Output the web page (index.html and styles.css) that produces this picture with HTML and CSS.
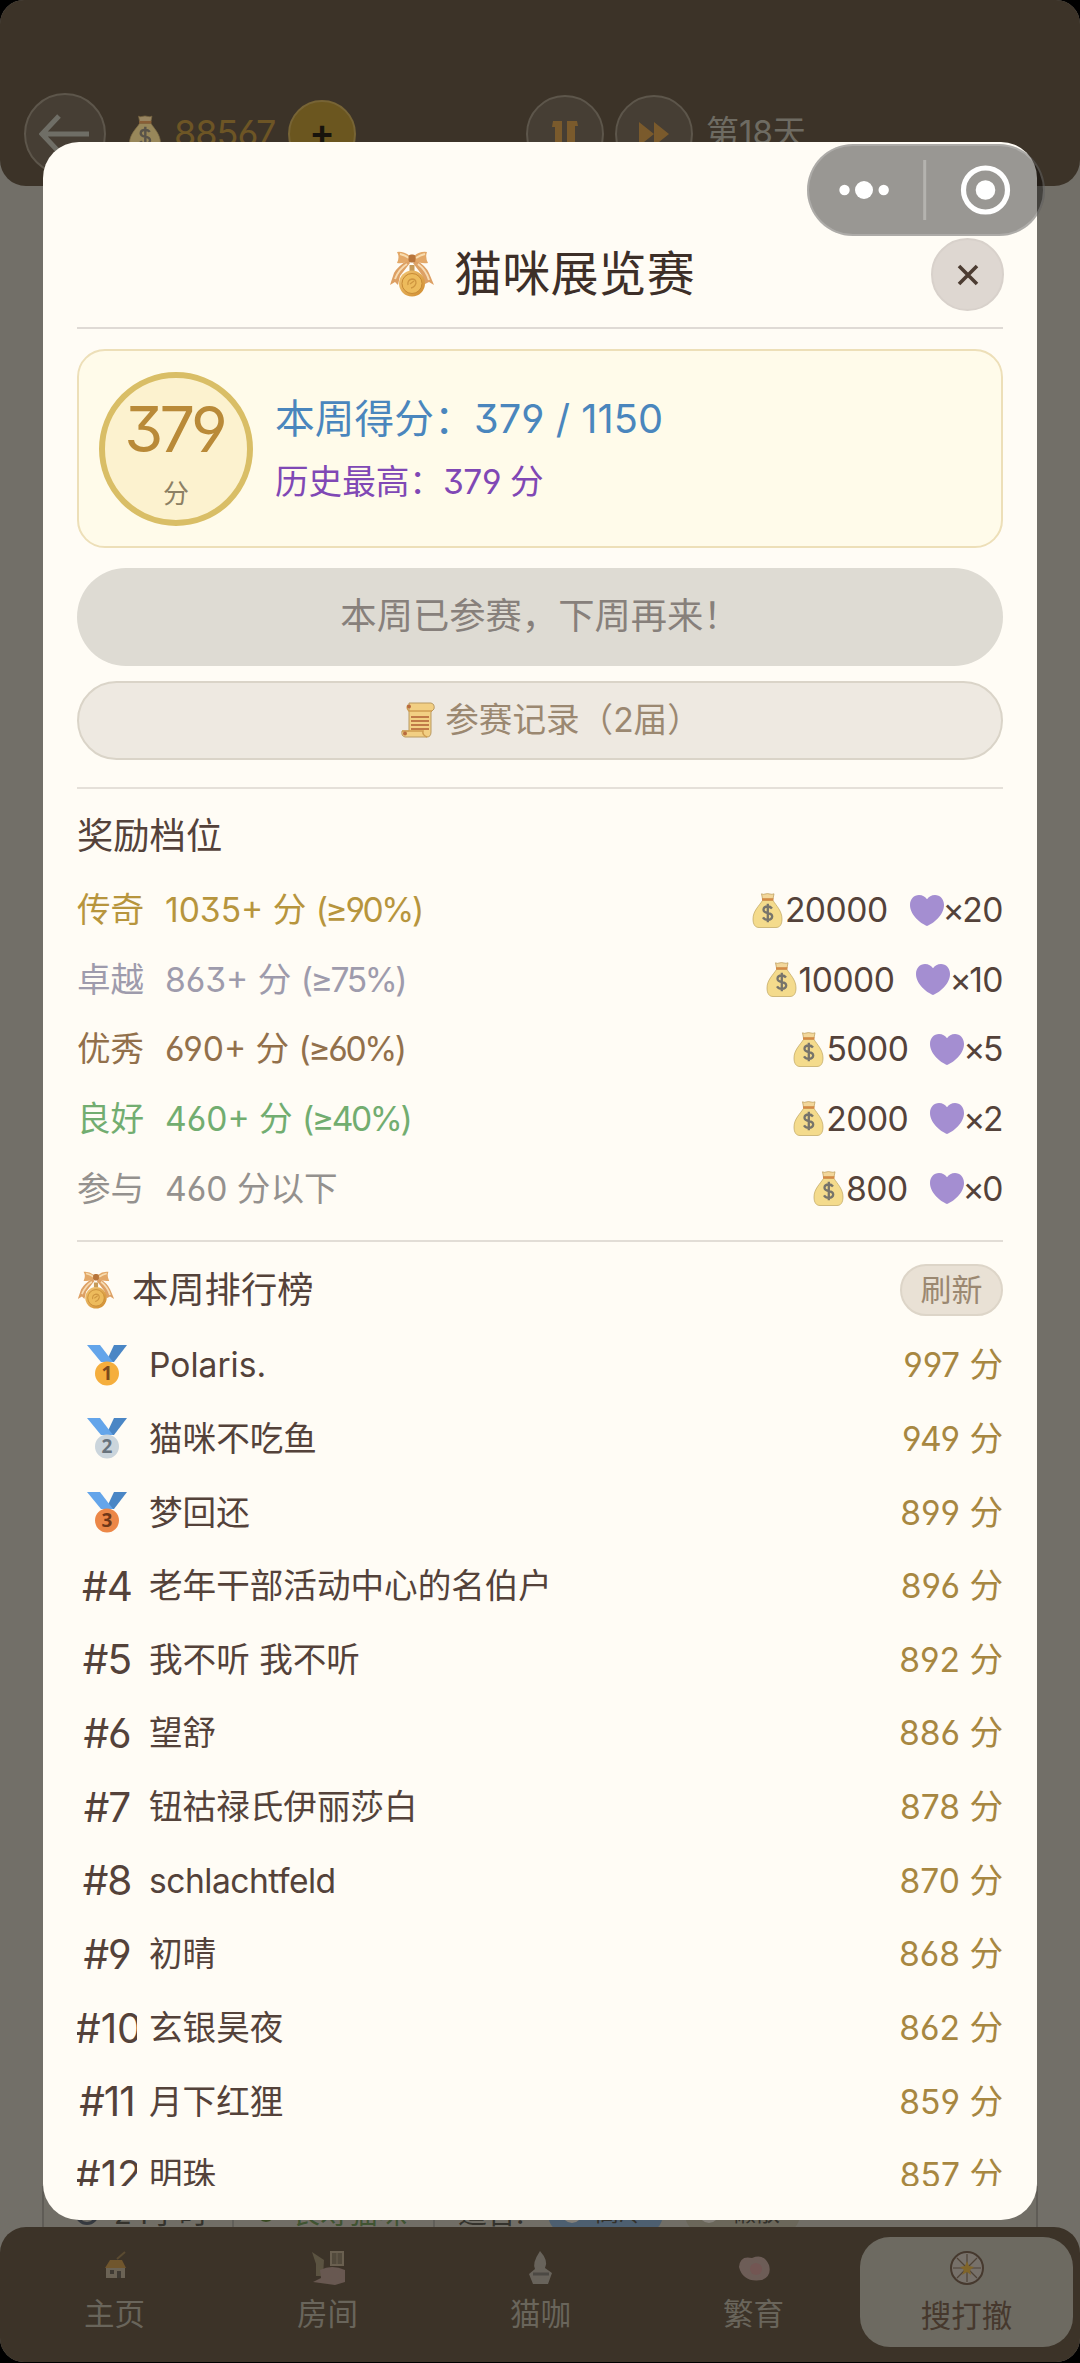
FILE: index.html
```html
<!DOCTYPE html>
<html lang="zh-CN">
<head>
<meta charset="utf-8">
<title>猫咪展览赛</title>
<link rel="stylesheet" href="styles.css">
</head>
<body>
<svg class="defs" width="0" height="0">
  <defs>
    <linearGradient id="gold" x1="0" y1="0" x2="1" y2="1"><stop offset="0" stop-color="#f3c877"/><stop offset="1" stop-color="#cf8a2c"/></linearGradient>
    <symbol id="bag" viewBox="0 0 30 35">
      <path d="M9 .8q2 1 3.500.2 2.500-.8 5 0 2 .7 4-.2l-1 5.200h-10.500z" fill="#f3d79a" stroke="#b99a58" stroke-width=".7"/>
      <path d="M10 7.500h10.500C24 13 29.500 18 29.500 26c0 6-2.500 8.500-6 8.500h-17c-3.500 0-6-2.500-6-8.500C.5 18 6.500 13 10 7.500z" fill="#f4db8c" stroke="#bda35f" stroke-width=".7"/>
      <path d="M9.500 5.300h11.500v2.400h-11.500z" fill="#d58a45"/>
      <path d="M19.500 15.500q-1.500-2-4.300-2-4.200.2-4.200 3.200 0 2.500 4.300 3.300 4.400.8 4.400 3.600-.2 3-4.400 3.200-3.300 0-4.800-2.500M15.300 10.800v18.500" fill="none" stroke="#77746b" stroke-width="2.300"/>
    </symbol>
    <symbol id="heart" viewBox="0 0 34 31"><path d="M17 31C11 28.500 0 20.500 0 10 0 4 4 0 9 0c3.500 0 6.300 1.600 8 4.300C18.700 1.600 21.500 0 25 0c5 0 9 4 9 10 0 10.500-11 18.500-17 21z" fill="#a48ed1"/></symbol>
    <symbol id="ribbon" viewBox="0 0 44 46">
      <path d="M18 9Q8 15 4 22L0 34l5-3 3 3 2-9 10-13zM26 9q10 6 13 13l5 12-5-3-4 2-3-9-9-12z" fill="#dda064"/>
      <path d="M17 13Q9 18 5 28M28 13q8 6 11 16" fill="none" stroke="#f7dbb2" stroke-width="2"/>
      <path d="M20 5Q13 0 7 1q3 5 0 11 8 1 13-3zM24 5q6-5 13-4-2 5 1 11-8 1-14-3z" fill="#e3a868"/>
      <path d="M10 3q5 1 9 4M35 3q-5 1-9 4" fill="none" stroke="#f8ddb0" stroke-width="2"/>
      <rect x="18.500" y="3.500" width="7" height="8" rx="2.500" fill="#b8753b"/>
      <path d="M22 14v6" stroke="#c69a58" stroke-width="5"/>
      <circle cx="22" cy="32.500" r="13" fill="url(#gold)"/>
      <circle cx="22" cy="32.500" r="10" fill="#edbb5c" stroke="#c78a35" stroke-width="1"/>
      <path d="M18 34q-1-5 4-6 4 0 4 4-1 4-5 5M20 33l4-3" fill="none" stroke="#cf9640" stroke-width="1.300"/>
    </symbol>
    <symbol id="strap" viewBox="0 0 40 41">
      <path d="M27 0h13L27 17h-8z" fill="#4a86c5"/><path d="M0 0h13l13 17h-12z" fill="#64a5ea"/>
    </symbol>
  </defs>
</svg>

<div class="app">
  <header class="topbar">
    <span class="round back"><svg width="52" height="44" viewBox="0 0 52 44"><path d="M50 22H3M20 4L3 22l17 18" fill="none" stroke="#6f6e66" stroke-width="5"/></svg></span>
    <svg class="coin" width="32" height="38"><use href="#bag"/></svg>
    <span class="money">88567</span>
    <span class="plus">+</span>
    <span class="round pause"><svg width="30" height="30" viewBox="0 0 30 30"><path d="M3 2h9v27H5V8H2zM17 2h10l1 5h-3v22h-8z" fill="#7a5a2c"/></svg></span>
    <span class="round fast"><svg width="32" height="26" viewBox="0 0 32 26"><path d="M1 1l15 12L1 25zM16 1l15 12-15 12z" fill="#7a5a2c"/></svg></span>
    <span class="day">第18天</span>
  </header>
  <main class="page">
    <div class="catcard">
      <span class="clock"></span><span class="info hours">24小时</span><i></i>
      <span class="leaf"></span><span class="info green">长寿猫咪</span><i></i>
      <span class="info fit">适合:</span>
      <span class="chip blue"><b></b>高冷</span><span class="chip"><b></b>懒散</span>
    </div>
  </main>
  <nav class="tabs">
    <a class="tab"><svg width="36" height="36" viewBox="0 0 36 36"><path d="M20 9L28 2" stroke="#5b4b31" stroke-width="2"/><path d="M8 18l5-8h12l4 8z" fill="#70562d"/><path d="M9 18h19v10H9z" fill="#6b6355"/><path d="M13 20h4v4h-4zM20 21h4v7h-4z" fill="#3f3a33"/></svg>主页</a>
    <a class="tab"><svg width="36" height="36" viewBox="0 0 36 36"><path d="M2 2l12 8-1 16H6V14z" fill="#5b5341"/><path d="M21 2h12v13H21z" fill="#524a3c" stroke="#6a6050" stroke-width="2"/><path d="M27 2v13" stroke="#6a6050"/><path d="M10 20q12-6 25 0v12l-10 3-22-3 8-4z" fill="#685851"/></svg>房间</a>
    <a class="tab"><svg width="36" height="36" viewBox="0 0 36 36"><path d="M17 1q9 10 5 17l7 5-4 11H10L6 24l6-5q-3-6 5-18z" fill="#68635b"/><path d="M10 24h16" stroke="#4c4944" stroke-width="3"/></svg>猫咖</a>
    <a class="tab"><svg width="36" height="36" viewBox="0 0 36 36"><path d="M3 17Q4 5 16 8q12-5 17 7 3 11-7 15Q7 33 3 17z" fill="#6d5d57"/><circle cx="20" cy="19" r="6" fill="#735653"/></svg>繁育</a>
    <a class="tab active"><svg width="36" height="36" viewBox="0 0 36 36"><circle cx="18" cy="18" r="16" fill="#77716a" stroke="#46392e" stroke-width="2"/><path d="M18 4v28M4 18h28M8 8l20 20M28 8L8 28" stroke="#4f4337" stroke-width="1.200"/><path d="M18 11l2 5 5 1-4 3 1 5-4-3-5 3 2-5-4-3 5-1z" fill="#80652a"/></svg>搜打撤</a>
  </nav>
</div>

<section class="modal">
  <div class="title">
    <svg width="44" height="46"><use href="#ribbon"/></svg>
    <h1>猫咪展览赛</h1>
    <button class="close"><svg width="22" height="22" viewBox="0 0 22 22"><path d="M2 2l18 18M20 2L2 20" stroke="#4c3c32" stroke-width="3.600"/></svg></button>
  </div>
  <div class="score">
    <div class="ring"><strong>379</strong><small>分</small></div>
    <div class="lines"><p class="week">本周得分：<span>379 / 1150</span></p><p class="best">历史最高：<span>379 分</span></p></div>
  </div>
  <button class="btn done">本周已参赛，下周再来！</button>
  <button class="btn record"><svg width="34" height="36" viewBox="0 0 34 36"><path d="M8 1h22q4 1 3 6l-3 3v20q0 5-4 5H4q-4-1-3-6h7z" fill="#f2cf83" stroke="#b99a62"/><path d="M7 3q-2 3 1 6h23M1 29h21q-1 4 4 6" fill="none" stroke="#cf9d51" stroke-width="1.500"/><circle cx="8" cy="4.500" r="2" fill="#b86b3f"/><circle cx="4" cy="31.500" r="2" fill="#b86b3f"/><path d="M10 15h18M10 19h18M10 23h18M10 27h18" stroke="#c07947" stroke-width="1.800"/></svg><span>参赛记录（2届）</span></button>

  <section class="tiers">
    <h2>奖励档位</h2>
    <div class="tier legend"><b>传奇</b><span>1035+ 分 <span class="pct">(≥90%)</span></span><em><svg class="bag"><use href="#bag"/></svg>20000<svg class="heart"><use href="#heart"/></svg><span class="x">×</span>20</em></div>
    <div class="tier great"><b>卓越</b><span>863+ 分 <span class="pct">(≥75%)</span></span><em><svg class="bag"><use href="#bag"/></svg>10000<svg class="heart"><use href="#heart"/></svg><span class="x">×</span>10</em></div>
    <div class="tier fine"><b>优秀</b><span>690+ 分 <span class="pct">(≥60%)</span></span><em><svg class="bag"><use href="#bag"/></svg>5000<svg class="heart"><use href="#heart"/></svg><span class="x">×</span>5</em></div>
    <div class="tier good"><b>良好</b><span>460+ 分 <span class="pct">(≥40%)</span></span><em><svg class="bag"><use href="#bag"/></svg>2000<svg class="heart"><use href="#heart"/></svg><span class="x">×</span>2</em></div>
    <div class="tier join"><b>参与</b><span>460 分以下</span><em><svg class="bag"><use href="#bag"/></svg>800<svg class="heart"><use href="#heart"/></svg><span class="x">×</span>0</em></div>
  </section>

  <section class="board">
    <div class="boardhead"><svg width="38" height="38" viewBox="0 0 44 46"><use href="#ribbon" width="44" height="46"/></svg><h2>本周排行榜</h2><button class="refresh">刷新</button></div>
    <div class="list">
      <div class="row"><span class="rank medal"><svg width="40" height="41" viewBox="0 0 40 41"><use href="#strap"/><circle cx="20" cy="28.500" r="12" fill="#f5ae3d"/><text x="20" y="34.500" fill="#7b4a1c">1</text></svg></span><span class="name">Polaris.</span><span class="pts">997 分</span></div>
      <div class="row"><span class="rank medal"><svg width="40" height="41" viewBox="0 0 40 41"><use href="#strap"/><circle cx="20" cy="28.500" r="12" fill="#cbd5dc"/><text x="20" y="34.500" fill="#68737d">2</text></svg></span><span class="name">猫咪不吃鱼</span><span class="pts">949 分</span></div>
      <div class="row"><span class="rank medal"><svg width="40" height="41" viewBox="0 0 40 41"><use href="#strap"/><circle cx="20" cy="28.500" r="12" fill="#ec8747"/><text x="20" y="34.500" fill="#6f3718">3</text></svg></span><span class="name">梦回还</span><span class="pts">899 分</span></div>
      <div class="row"><span class="rank">#4</span><span class="name">老年干部活动中心的名伯户</span><span class="pts">896 分</span></div>
      <div class="row"><span class="rank">#5</span><span class="name">我不听 我不听</span><span class="pts">892 分</span></div>
      <div class="row"><span class="rank">#6</span><span class="name">望舒</span><span class="pts">886 分</span></div>
      <div class="row"><span class="rank">#7</span><span class="name">钮祜禄氏伊丽莎白</span><span class="pts">878 分</span></div>
      <div class="row"><span class="rank">#8</span><span class="name latin">schlachtfeld</span><span class="pts">870 分</span></div>
      <div class="row"><span class="rank">#9</span><span class="name">初晴</span><span class="pts">868 分</span></div>
      <div class="row"><span class="rank wide">#10</span><span class="name">玄银昊夜</span><span class="pts">862 分</span></div>
      <div class="row"><span class="rank">#11</span><span class="name">月下红狸</span><span class="pts">859 分</span></div>
      <div class="row"><span class="rank wide">#12</span><span class="name">明珠</span><span class="pts">857 分</span></div>
    </div>
  </section>
</section>

<div class="capsule"><svg width="238" height="92" viewBox="0 0 238 92"><g fill="#fff"><circle cx="37.500" cy="46" r="5.200"/><circle cx="57" cy="46" r="9"/><circle cx="76.700" cy="46" r="5.200"/><circle cx="178.500" cy="46" r="9.800"/></g><circle cx="178.500" cy="46" r="22" fill="none" stroke="#fff" stroke-width="5.200"/><path d="M117.700 16v60" stroke="#b4b3af" stroke-width="3"/></svg></div>
</body>
</html>
```
FILE: styles.css
```css
* { box-sizing: border-box; }
body { margin: 0; width: 1080px; height: 2363px; overflow: hidden; position: relative; background: #000; font-family: Inter, "Noto Sans CJK SC", sans-serif; font-size: 33.6px; line-height: 1; color: #54423a; font-feature-settings: "cv03", "cv04", "cv09"; }
h1, h2, p { margin: 0; font-weight: 400; }
button { border: 0; padding: 0; margin: 0; font: inherit; color: inherit; font-feature-settings: inherit; }
svg { flex: none; display: block; }
.defs { position: absolute; }

.app { height: 2362px; display: flex; flex-direction: column; background: #726f68; border-radius: 24px; overflow: hidden; }
.topbar { height: 186px; flex: none; background: #3c3328; border-radius: 0 0 26px 26px; padding: 82px 0 0 24px; display: flex; align-items: center; }
.round { flex: none; border: 2px solid #5d564b; background: #463e34; border-radius: 50%; display: flex; align-items: center; justify-content: center; }
.back { width: 82px; height: 82px; }
.coin { margin-left: 23px; opacity: .5; }
.money { margin-left: 13px; width: 114px; padding-bottom: 3px; color: #6d5525; font-size: 36px; letter-spacing: -1px; }
.plus { width: 68px; height: 68px; border-radius: 50%; background: #6b561f; border: 2px solid #776435; display: flex; align-items: center; justify-content: center; color: #17130c; font-size: 38px; font-weight: 600; padding-bottom: 4px; }
.pause { width: 78px; height: 78px; margin-left: 170px; }
.fast { width: 78px; height: 78px; margin-left: 11px; }
.day { margin-left: 13px; padding-bottom: 3px; color: #6e6b62; font-size: 33px; }

.page { flex: 1; display: flex; align-items: flex-end; padding: 0 42px; overflow: hidden; }
.catcard { width: 998px; height: 41px; overflow: hidden; display: flex; align-items: center; border: solid #5f5c56; border-width: 0 2px; background: #716e66; font-size: 29px; padding: 13px 0 0 31px; color: #34322c; white-space: nowrap; }
.catcard i { width: 2px; height: 40px; background: #615f59; }
.clock { width: 24px; height: 24px; border: 3px solid #35393f; border-radius: 50%; margin-right: 15px; }
.hours { width: 118px; }
.leaf { width: 18px; height: 18px; border-radius: 50%; background: #384a22; margin: 0 16px 0 23px; }
.green { color: #405432; width: 142px; }
.fit { margin-left: 23px; width: 90px; }
.chip { height: 41px; width: 115px; flex: none; margin-right: 22px; border-radius: 20px; background: #6b675a; display: flex; align-items: center; padding-left: 14px; gap: 13px; font-size: 24px; }
.chip b { width: 20px; height: 20px; border-radius: 50%; background: #85817a; }
.chip.blue { background: #4d5f70; }

.tabs { height: 135px; flex: none; background: #3c3328; border-radius: 26px 26px 0 0; padding: 10px 8px 15px; display: grid; grid-template-columns: repeat(5, 213px); }
.tab { display: flex; flex-direction: column; align-items: center; padding-top: 13px; gap: 13px; color: #69655b; font-size: 30.500px; }
.tab svg { width: 36px; height: 36px; }
.tab.active { background: #6d6a61; border-radius: 30px; color: #46382d; gap: 15px; }

.modal { position: absolute; left: 43px; top: 142px; width: 994px; height: 2078px; background: #fffcf5; border-radius: 36px; padding: 96px 34px 0; display: flex; flex-direction: column; }
.title { height: 91px; flex: none; border-bottom: 2px solid #dfdad5; display: grid; grid-template-columns: 313px 44px 1fr 72px; align-items: start; }
.title > svg { grid-column: 2; margin-top: 13px; }
.title h1 { margin: 12px 0 0 20px; font-size: 48px; color: #3d2f28; letter-spacing: .2px; }
.close { width: 73px; height: 73px; border-radius: 50%; background: #ded7d1; border: 2px solid #d8d1cb; display: flex; align-items: center; justify-content: center; }
.score { margin-top: 20px; height: 199px; flex: none; border: 2px solid #eddfb8; border-radius: 28px; background: #fffbea; display: flex; align-items: center; padding-left: 20px; }
.ring { width: 154px; height: 154px; border: 6.500px solid #d9be66; border-radius: 50%; background: #fcf2cf; display: flex; flex-direction: column; align-items: center; color: #b98a38; }
.ring strong { font-size: 63px; font-weight: 400; margin-top: 20px; letter-spacing: -4px; padding-right: 4px; }
.ring small { font-size: 26px; color: #8c8064; margin-top: 20px; }
.lines { margin-left: 22px; }
.week { font-size: 39.700px; color: #4a86bd; margin-top: 2px; letter-spacing: .1px; }
.best { margin-top: 25px; color: #8048b5; }
.best span { letter-spacing: -.4px; }
.btn { flex: none; display: flex; align-items: center; justify-content: center; border-radius: 49px; }
.done { margin-top: 20px; height: 98px; background: #dedbd3; color: #87807b; font-size: 36.300px; padding-bottom: 2px; }
.record { margin-top: 15px; height: 79px; background: #eee9e1; border: 2px solid #dad4c8; color: #9b8871; gap: 10px; padding: 0 0 2px 22px; }
.tiers { margin-top: 27px; border-top: 2px solid #e5e0d9; }
h2 { font-size: 36.300px; }
.tiers h2 { margin: 29px 0 21px; }
.tier { height: 69.600px; display: flex; align-items: center; }
.tier b { font-weight: 400; width: 88px; }
.pct { letter-spacing: -2.4px; }
.tier em { margin-left: auto; color: #54423a; font-style: normal; display: flex; align-items: center; letter-spacing: -.5px; }
.bag { width: 31px; height: 35px; margin-right: 2px; }
.heart { width: 34px; height: 31px; margin: 0 2px 0 22px; }
.x { margin: 0 -2px 0 -3px; }
.legend { color: #b7953d; } .great { color: #9e9bac; } .fine { color: #92704b; } .good { color: #72ad70; } .join { color: #94918e; }
.board { border-top: 2px solid #e2ddd6; margin-top: 17px; }
.boardhead { height: 86px; padding-top: 9px; display: flex; align-items: center; }
.boardhead h2 { margin-left: 17px; }
.refresh { margin-left: auto; width: 103px; height: 52px; border-radius: 26px; background: #e9e1d5; border: 2px solid #ddd5c8; color: #9b8871; font-size: 31px; }
.list { height: 858px; overflow: hidden; }
.row { height: 73.650px; display: flex; align-items: center; }
.rank { width: 60px; height: 60px; flex: none; overflow: hidden; font-size: 40.500px; padding-top: 2px; display: flex; align-items: center; justify-content: center; letter-spacing: -1px; }
.rank.medal { padding-top: 0; }
.rank.wide { justify-content: flex-start; letter-spacing: 0; text-indent: -2px; }
.rank text { font: 700 19px "Noto Sans", sans-serif; text-anchor: middle; letter-spacing: 0; }
.name { margin-left: 12px; }
.latin { letter-spacing: -.5px; }
.pts { margin-left: auto; color: #a78741; }
.capsule { position: absolute; left: 807px; top: 144px; width: 238px; height: 92px; border-radius: 46px; background: rgba(0,0,0,.4); box-shadow: inset 0 0 0 2px rgba(255,255,255,.2); }
```
